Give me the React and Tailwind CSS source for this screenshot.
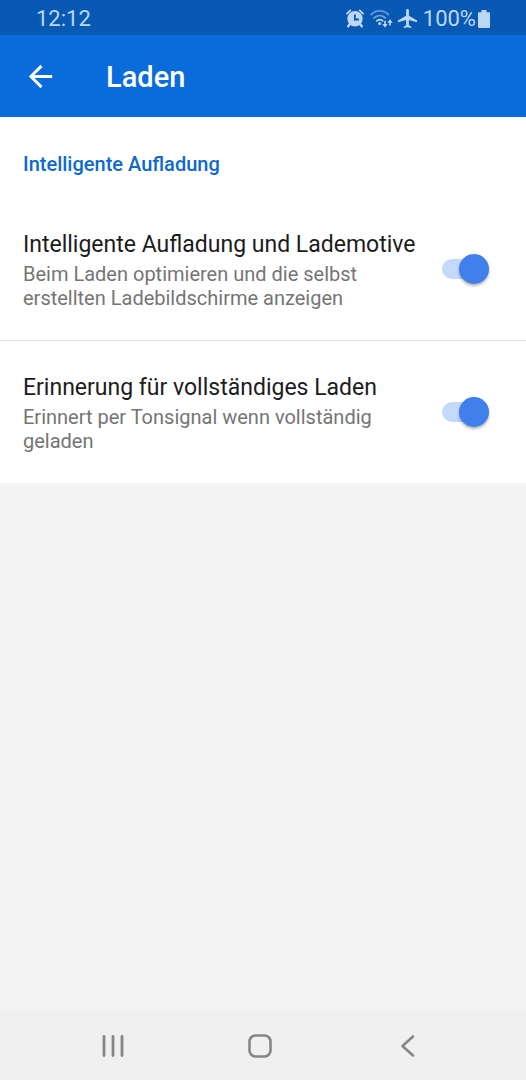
import { useState } from 'react';
import { MdArrowBack, MdAirplanemodeActive } from 'react-icons/md';

const SETTINGS = [
  {
    id: 'smart-charging',
    title: 'Intelligente Aufladung und Lademotive',
    description: 'Beim Laden optimieren und die selbst erstellten Ladebildschirme anzeigen',
  },
  {
    id: 'full-reminder',
    title: 'Erinnerung für vollständiges Laden',
    description: 'Erinnert per Tonsignal wenn vollständig geladen',
  },
];

function AlarmIcon() {
  return (
    <svg viewBox="0 0 20 20" className="size-5" fill="none" aria-hidden="true">
      <path d="M0.900 4.600 4.300 1.400M17.100 4.600 13.700 1.400" stroke="currentColor" strokeWidth="1.8" strokeLinecap="round" />
      <path d="M4 15 2.200 17.300M14 15l1.800 2.300" stroke="currentColor" strokeWidth="2.4" strokeLinecap="round" />
      <circle cx="9" cy="9.800" r="7.700" fill="currentColor" />
      <path d="M8.900 5.400v5.100h4" stroke="#0759b4" strokeWidth="1.8" />
    </svg>
  );
}

function WifiIcon() {
  return (
    <svg viewBox="0 0 24 20" className="h-5 w-6" fill="none" stroke="currentColor" aria-hidden="true">
      <path d="M0.500 6C5.900.5 13.600.5 19 6" strokeWidth="1.8" opacity="0.5" />
      <path d="M3.500 9.300c3.800-3.700 8.700-3.700 12.500 0" strokeWidth="1.8" opacity="0.6" />
      <path d="M6.300 12.300c2.100-2 4.800-2 6.900 0" strokeWidth="1.8" />
      <circle cx="9.600" cy="14.500" r="1.500" fill="currentColor" stroke="none" />
      <path d="M15 11.800v4.500M20 16.500v-4" strokeWidth="1.6" />
      <path d="M12.300 15h5.400l-2.700 3.400zM17.300 13.700h5.400L20 10.300z" fill="currentColor" stroke="none" />
    </svg>
  );
}

function BatteryIcon() {
  return (
    <svg viewBox="0 0 12 18" className="h-[18px] w-3" fill="currentColor" aria-hidden="true">
      <path d="M3.500 0h5v2.200H11a1 1 0 0 1 1 1V17a1 1 0 0 1-1 1H1a1 1 0 0 1-1-1V3.200a1 1 0 0 1 1-1h2.500z" />
    </svg>
  );
}

function StatusBar() {
  return (
    <div className="flex h-[35px] items-center justify-between bg-[#0759b4] pt-0.5 pr-9 pl-9 text-[22px] leading-none text-[#bdd7f5]">
      <span>12:12</span>
      <div className="flex items-center">
        <AlarmIcon />
        <span className="ml-1 flex">
          <WifiIcon />
        </span>
        <MdAirplanemodeActive className="ml-0.5 size-[23px]" />
        <span className="ml-1">100%</span>
        <span className="ml-0.5 flex">
          <BatteryIcon />
        </span>
      </div>
    </div>
  );
}

function SettingRow({ id, title, description }) {
  const [enabled, setEnabled] = useState(true);

  return (
    <label
      htmlFor={id}
      className="flex items-center justify-between gap-3 border-b border-[#e3e3e3] bg-white py-[29px] pr-[37px] pl-[23px] last:border-b-0"
    >
      <span className="min-w-0 pt-0.5">
        <span className="block text-[23px] leading-[31px] text-[#1c1c1c]">{title}</span>
        <span className="mt-0.5 block max-w-[370px] pb-px text-xl leading-6 text-[#757575]">{description}</span>
      </span>
      <input
        id={id}
        type="checkbox"
        role="switch"
        checked={enabled}
        onChange={(e) => setEnabled(e.target.checked)}
        className="flex h-5 w-[47px] shrink-0 cursor-pointer appearance-none items-center rounded-full bg-[#d5d5d5] before:size-[30px] before:shrink-0 before:rounded-full before:bg-white before:shadow-[0_2px_3px_rgba(0,0,0,0.3)] checked:justify-end checked:bg-[#c5dafa] checked:before:bg-[#4080ed]"
      />
    </label>
  );
}

function NavigationBar() {
  return (
    <nav className="flex h-[71px] items-center justify-around bg-[#f0f0f0] pt-0.5 pr-[46px] pl-10 text-[#868686]">
      <button type="button" aria-label="Letzte Apps">
        <svg viewBox="0 0 24 24" className="size-6" fill="none" stroke="currentColor" strokeWidth="2.8" strokeLinecap="round">
          <path d="M3 2.500v19M12 2.500v19M21 2.500v19" />
        </svg>
      </button>
      <button type="button" aria-label="Startseite">
        <svg viewBox="0 0 24 24" className="size-6" fill="none" stroke="currentColor" strokeWidth="2.6">
          <rect x="1.500" y="1.500" width="21" height="21" rx="6" />
        </svg>
      </button>
      <button type="button" aria-label="Zurück">
        <svg viewBox="0 0 24 24" className="size-6" fill="none" stroke="currentColor" strokeWidth="2.6" strokeLinecap="round" strokeLinejoin="round">
          <path d="M18 2.500 7.500 12 18 21.500" />
        </svg>
      </button>
    </nav>
  );
}

export default function App() {
  return (
    <div className="flex min-h-screen flex-col bg-[#f4f4f4] font-[Roboto,sans-serif]">
      <StatusBar />
      <header className="flex h-[82px] items-center gap-12 bg-[#0a6cdb] pl-[23px] text-white">
        <button type="button" aria-label="Zurück">
          <MdArrowBack className="size-[35px]" />
        </button>
        <h1 className="pt-0.5 text-[29px] leading-9 font-medium">Laden</h1>
      </header>

      <main className="flex-1">
        <section>
          <h2 className="bg-white px-[23px] pt-[35px] pb-[22px] text-xl leading-6 font-medium text-[#0d69d0]">
            Intelligente Aufladung
          </h2>
          <div>
            {SETTINGS.map((setting) => (
              <SettingRow key={setting.id} {...setting} />
            ))}
          </div>
        </section>
      </main>

      <NavigationBar />
    </div>
  );
}
